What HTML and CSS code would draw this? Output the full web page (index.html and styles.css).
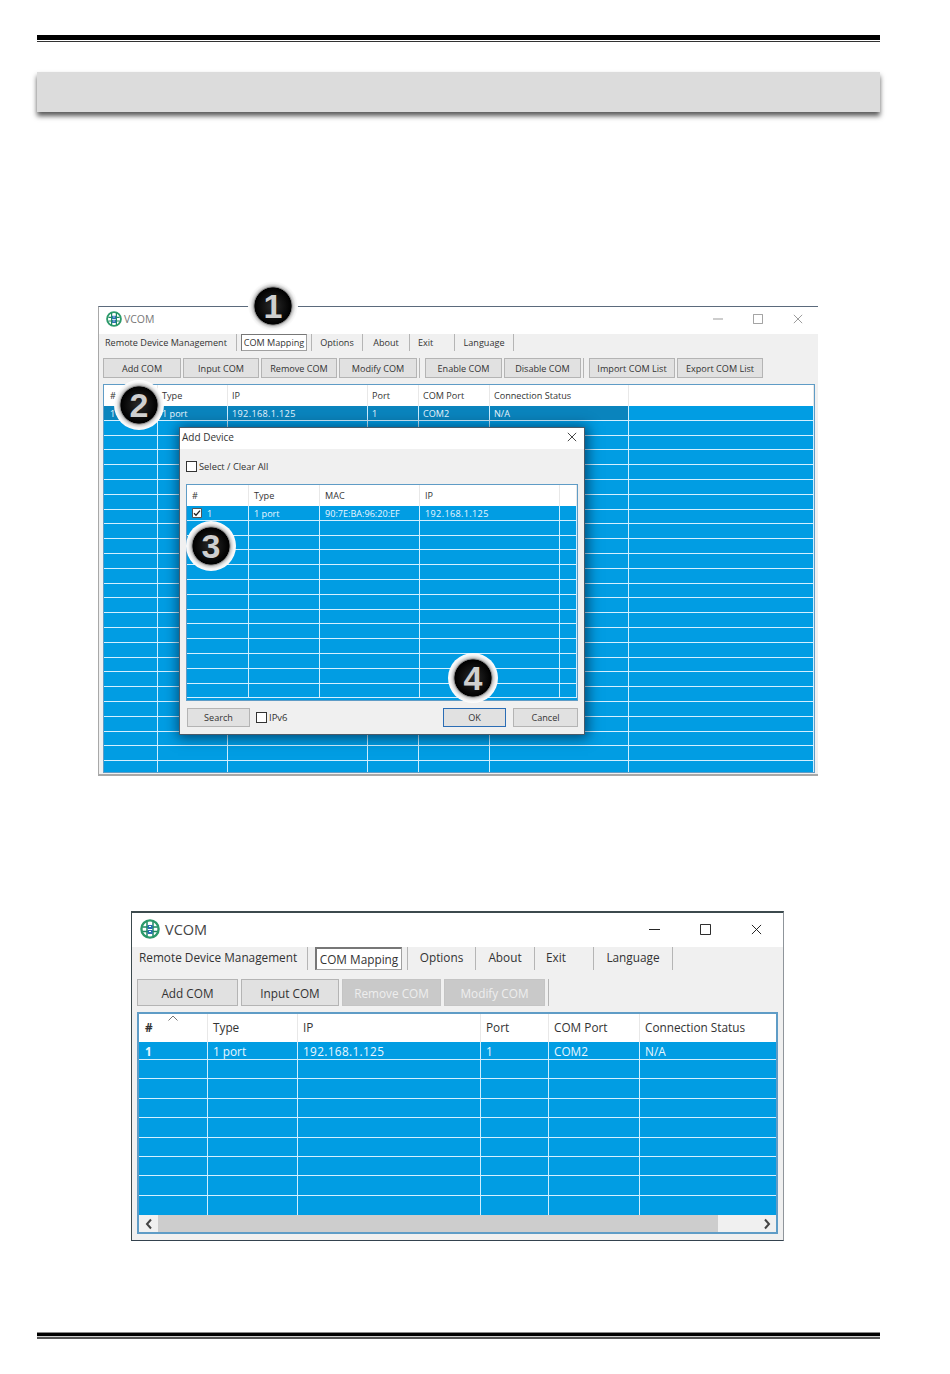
FILE: index.html
```html
<!DOCTYPE html>
<html lang="en">
<head>
<meta charset="utf-8">
<title>VCOM COM Mapping</title>
<link rel="stylesheet" href="styles.css">
</head>
<body>
<svg class="defs" width="0" height="0" aria-hidden="true">
  <symbol id="logo" viewBox="0 0 20 20">
    <circle cx="10" cy="10" r="8.6" fill="none" stroke="#2c9a6a" stroke-width="2.4"/>
    <circle cx="10" cy="10" r="7" fill="#fff"/>
    <path d="M3 8h14M3 12.5h14M7 2.5v15M13 2.5v15" stroke="#1d8a60" stroke-width="1.5"/>
    <rect x="7.6" y="6" width="5" height="4" fill="#2a6fb0"/>
    <rect x="7.6" y="11" width="5" height="4" fill="#2a6fb0"/>
    <path d="M9 7.5h2M9 12.5h2" stroke="#fff" stroke-width="1"/>
  </symbol>
  <symbol id="cmin" viewBox="0 0 12 12"><path d="M0 6h12" stroke="currentColor" fill="none"/></symbol>
  <symbol id="cmax" viewBox="0 0 12 12"><path d="M.5.5h11v11H.5z" stroke="currentColor" fill="none"/></symbol>
  <symbol id="cx" viewBox="0 0 12 12"><path d="M1 1l10 10M11 1L1 11" stroke="currentColor" fill="none"/></symbol>
</svg>

<main class="page">
  <div class="rule-top"></div>
  <div class="band"></div>

  <section class="win win-a">
    <header class="title">
      <svg class="logo"><use href="#logo"/></svg>
      <span class="title-text">VCOM</span>
      <div class="controls">
        <svg class="ctl"><use href="#cmin"/></svg>
        <svg class="ctl"><use href="#cmax"/></svg>
        <svg class="ctl"><use href="#cx"/></svg>
      </div>
    </header>
    <nav class="menu">
      <span class="m">Remote Device Management</span>
      <span class="m c"><b class="tab">COM Mapping</b></span>
      <span class="m c">Options</span>
      <span class="m c">About</span>
      <span class="m exit">Exit</span>
      <span class="m c">Language</span>
    </nav>
    <div class="tools">
      <button class="btn">Add COM</button>
      <button class="btn">Input COM</button>
      <button class="btn">Remove COM</button>
      <button class="btn">Modify COM</button>
      <i class="tsep"></i>
      <button class="btn">Enable COM</button>
      <button class="btn">Disable COM</button>
      <i class="tsep"></i>
      <button class="btn">Import COM List</button>
      <button class="btn">Export COM List</button>
    </div>
    <div class="list">
      <div class="row head"><span>#</span><span>Type</span><span>IP</span><span>Port</span><span>COM Port</span><span>Connection Status</span><span></span></div>
      <div class="row sel"><span>1</span><span>1 port</span><span class="ip">192.168.1.125</span><span>1</span><span>COM2</span><span>N/A</span><span class="nosel"></span></div>
      <div class="row"><i></i><i></i><i></i><i></i><i></i><i></i><i></i></div>
      <div class="row"><i></i><i></i><i></i><i></i><i></i><i></i><i></i></div>
      <div class="row"><i></i><i></i><i></i><i></i><i></i><i></i><i></i></div>
      <div class="row"><i></i><i></i><i></i><i></i><i></i><i></i><i></i></div>
      <div class="row"><i></i><i></i><i></i><i></i><i></i><i></i><i></i></div>
      <div class="row"><i></i><i></i><i></i><i></i><i></i><i></i><i></i></div>
      <div class="row"><i></i><i></i><i></i><i></i><i></i><i></i><i></i></div>
      <div class="row"><i></i><i></i><i></i><i></i><i></i><i></i><i></i></div>
      <div class="row"><i></i><i></i><i></i><i></i><i></i><i></i><i></i></div>
      <div class="row"><i></i><i></i><i></i><i></i><i></i><i></i><i></i></div>
      <div class="row"><i></i><i></i><i></i><i></i><i></i><i></i><i></i></div>
      <div class="row"><i></i><i></i><i></i><i></i><i></i><i></i><i></i></div>
      <div class="row"><i></i><i></i><i></i><i></i><i></i><i></i><i></i></div>
      <div class="row"><i></i><i></i><i></i><i></i><i></i><i></i><i></i></div>
      <div class="row"><i></i><i></i><i></i><i></i><i></i><i></i><i></i></div>
      <div class="row"><i></i><i></i><i></i><i></i><i></i><i></i><i></i></div>
      <div class="row"><i></i><i></i><i></i><i></i><i></i><i></i><i></i></div>
      <div class="row"><i></i><i></i><i></i><i></i><i></i><i></i><i></i></div>
      <div class="row"><i></i><i></i><i></i><i></i><i></i><i></i><i></i></div>
      <div class="row"><i></i><i></i><i></i><i></i><i></i><i></i><i></i></div>
      <div class="row"><i></i><i></i><i></i><i></i><i></i><i></i><i></i></div>
      <div class="row"><i></i><i></i><i></i><i></i><i></i><i></i><i></i></div>
      <div class="row"><i></i><i></i><i></i><i></i><i></i><i></i><i></i></div>
      <div class="row"><i></i><i></i><i></i><i></i><i></i><i></i><i></i></div>
    </div>

    <div class="dialog">
      <header class="dlg-title">
        <span>Add Device</span>
        <svg class="dlg-x"><use href="#cx"/></svg>
      </header>
      <div class="dlg-body">
        <label class="check-line"><i class="box"></i>Select / Clear All</label>
        <div class="list list-d">
          <div class="row head"><span>#</span><span>Type</span><span>MAC</span><span>IP</span><span></span></div>
          <div class="row first">
            <span class="chk-cell">
              <svg class="tick" viewBox="0 0 10 10"><path d="M.5.5h9v9h-9z" fill="#fff" stroke="#555"/><path d="M2 5.2l2 2 4-4.6" fill="none" stroke="#222" stroke-width="1.3"/></svg>
              1
            </span>
            <span>1 port</span><span>90:7E:BA:96:20:EF</span><span class="ip">192.168.1.125</span><span></span>
          </div>
          <div class="row"><i></i><i></i><i></i><i></i><i></i></div>
          <div class="row"><i></i><i></i><i></i><i></i><i></i></div>
          <div class="row"><i></i><i></i><i></i><i></i><i></i></div>
          <div class="row"><i></i><i></i><i></i><i></i><i></i></div>
          <div class="row"><i></i><i></i><i></i><i></i><i></i></div>
          <div class="row"><i></i><i></i><i></i><i></i><i></i></div>
          <div class="row"><i></i><i></i><i></i><i></i><i></i></div>
          <div class="row"><i></i><i></i><i></i><i></i><i></i></div>
          <div class="row"><i></i><i></i><i></i><i></i><i></i></div>
          <div class="row"><i></i><i></i><i></i><i></i><i></i></div>
          <div class="row"><i></i><i></i><i></i><i></i><i></i></div>
          <div class="row"><i></i><i></i><i></i><i></i><i></i></div>
        </div>
        <footer class="dlg-foot">
          <button class="btn btn-d">Search</button>
          <label class="check-line small"><i class="box"></i>IPv6</label>
          <span class="grow"></span>
          <button class="btn btn-d btn-ok">OK</button>
          <button class="btn btn-d btn-c">Cancel</button>
        </footer>
      </div>
    </div>

    <span class="badge b1">1</span>
    <span class="badge b2">2</span>
    <span class="badge b3">3</span>
    <span class="badge b4">4</span>
  </section>

  <section class="win win-b">
    <header class="title">
      <svg class="logo"><use href="#logo"/></svg>
      <span class="title-text">VCOM</span>
      <div class="controls">
        <svg class="ctl"><use href="#cmin"/></svg>
        <svg class="ctl"><use href="#cmax"/></svg>
        <svg class="ctl"><use href="#cx"/></svg>
      </div>
    </header>
    <nav class="menu">
      <span class="m">Remote Device Management</span>
      <span class="m c"><b class="tab">COM Mapping</b></span>
      <span class="m c">Options</span>
      <span class="m c">About</span>
      <span class="m exit">Exit</span>
      <span class="m c">Language</span>
    </nav>
    <div class="tools">
      <button class="btn">Add COM</button>
      <button class="btn">Input COM</button>
      <button class="btn off">Remove COM</button>
      <button class="btn off">Modify COM</button>
      <i class="tsep"></i>
    </div>
    <div class="list">
      <div class="row head"><span class="hash">#<svg class="caret" viewBox="0 0 10 6"><path d="M.5 5.5L5 1l4.5 4.5" fill="none" stroke="#777"/></svg></span><span>Type</span><span>IP</span><span>Port</span><span>COM Port</span><span>Connection Status</span></div>
      <div class="row first"><span class="strong">1</span><span>1 port</span><span class="ip">192.168.1.125</span><span>1</span><span>COM2</span><span>N/A</span></div>
      <div class="row"><i></i><i></i><i></i><i></i><i></i><i></i></div>
      <div class="row"><i></i><i></i><i></i><i></i><i></i><i></i></div>
      <div class="row"><i></i><i></i><i></i><i></i><i></i><i></i></div>
      <div class="row"><i></i><i></i><i></i><i></i><i></i><i></i></div>
      <div class="row"><i></i><i></i><i></i><i></i><i></i><i></i></div>
      <div class="row"><i></i><i></i><i></i><i></i><i></i><i></i></div>
      <div class="row"><i></i><i></i><i></i><i></i><i></i><i></i></div>
      <div class="row last"><i></i><i></i><i></i><i></i><i></i><i></i></div>
      <div class="hscroll">
        <span class="arrow"><svg viewBox="0 0 8 12"><path d="M6 1.5L2 6l4 4.5" fill="none" stroke="#444" stroke-width="2"/></svg></span>
        <span class="thumb"></span>
        <span class="grow"></span>
        <span class="arrow"><svg viewBox="0 0 8 12"><path d="M2 1.5L6 6l-4 4.5" fill="none" stroke="#444" stroke-width="2"/></svg></span>
      </div>
    </div>
  </section>

  <div class="rule-bottom"></div>
</main>
</body>
</html>
```
FILE: styles.css
```css
* { box-sizing: border-box; }
html, body { margin: 0; padding: 0; background: #fff; }
body { font-family: "Open Sans", "Noto Sans", sans-serif; color: #333; }
.defs { position: absolute; }
.page { width: 950px; height: 1374px; padding: 35px 70px 0 37px; overflow: hidden; }

.rule-top { height: 7px; border-top: 5px solid #000; border-bottom: 1px solid #333; }
.band {
  height: 40px; margin-top: 30px; background: #dcdcdc;
  box-shadow: 0 4px 5px 0 rgba(0, 0, 0, .65);
}
.rule-bottom {
  height: 7px; margin-top: 91px;
  background: linear-gradient(#000 0 3px, #ccc 3px);
  border-top: 1px solid #888; border-bottom: 2px solid #555;
}

/* window shell */
.win { position: relative; display: flex; flex-direction: column; background: #f0f0f0; }
.title { display: flex; align-items: center; background: #fff; flex: none; }
.title-text { color: #666; }
.controls { margin-left: auto; display: flex; }
.ctl { display: block; }
.menu { display: grid; flex: none; align-content: start; }
.m { display: flex; align-items: center; border-right: 1px solid #b5b5b5; white-space: nowrap; color: #333; }
.m.c { justify-content: center; }
.tab { font-weight: 400; display: flex; align-items: center; justify-content: center; background: #fff; border: 1px solid #a0a0a0; border-left-color: #777; border-top-color: #777; }
.tools { display: grid; flex: none; }
.btn {
  font: inherit; color: #333; padding: 0; background: #e1e1e1; border: 1px solid #b4b4b4;
  white-space: nowrap; display: block;
}
.btn.off { background: #c9c9c9; border-color: #c4c4c4; color: #eee; }
.tsep { display: block; border-left: 1px solid #b5b5b5; }
.list { border: 1px solid #5f9cc6; background: #019de3; overflow: hidden; }
.row { display: grid; background: #019de3; border-bottom: 1px solid #d4f0ff; color: #eaf7ff; }
.row > * { display: flex; align-items: center; border-right: 1px solid #cdeeff; white-space: nowrap; overflow: hidden; }
.row.head { background: #fff; border-bottom: 0; color: #333; }
.row.head > * { border-right-color: #e8e8e8; }
.row.sel { background: #0a84bd; }
.nosel { background: #019de3; }
.grow { flex: 1; }
.ip { letter-spacing: .35px; }

/* first window */
.win-a {
  width: 720px; height: 470px; margin: 194px 0 0 61px;
  border-top: 1px solid #5b6a7c; border-left: 1px solid #a8a8a8; border-bottom: 2px solid #a8a8a8;
  font-size: 9.1px;
}
.win-a .title { height: 27px; padding: 0 15px 3px 7px; }
.win-a .logo { width: 16px; height: 16px; margin-right: 2px; }
.win-a .title-text { font-size: 10.5px; color: #777; }
.win-a .controls { gap: 30px; color: #888; }
.win-a .ctl { width: 10px; height: 10px; }
.win-a .menu {
  height: 24px; padding-left: 6px;
  grid-template-columns: 132px 75px 51px 47px 45px 59px;
  grid-template-rows: 17px;
}
.win-a .tab { width: 66px; height: 17px; }
.win-a .exit { padding-left: 8px; }
.win-a .tools {
  height: 20px; padding-left: 4px; gap: 2px;
  grid-template-columns: 78px 76px 76px 78px 4px 77px 77px 4px 86px 86px;
}
.win-a .list { height: 389px; margin: 6px 3px 0 4px; }
.win-a .row { height: 14.8px; grid-template-columns: 54px 70px 140px 51px 71px 139px 1fr; }
.win-a .row.head { height: 21px; }
.row > span { padding-left: 4px; }
.row > span:first-child { padding-left: 6px; }
.row:not(.head) > span { padding-top: 1px; }
.row.sel > span { padding-top: 2px; }

/* dialog over the first window */
.dialog {
  position: absolute; left: 80px; top: 120px; width: 406px; height: 308px;
  display: flex; flex-direction: column; background: #f0f0f0;
  box-shadow: 1px 1px 12px 2px rgba(0, 30, 60, .65); border: 1px solid #4a5a68;
}
.dlg-title { height: 21px; flex: none; background: #fff; display: flex; align-items: center; padding: 0 7px 3px 2px; font-size: 10px; }
.dlg-x { width: 10px; height: 10px; margin-left: auto; color: #222; }
.dlg-body { flex: 1; display: flex; flex-direction: column; padding: 0 6px 0 6px; min-height: 0; }
.check-line { display: flex; align-items: center; gap: 2px; height: 35px; flex: none; color: #333; font-size: 9.3px; }
.box { display: block; width: 11px; height: 11px; background: #fff; border: 1px solid #333; }
.win-a .list-d { height: 217px; margin: 0; flex: none; }
.win-a .list-d .row { grid-template-columns: 62px 71px 100px 140px 1fr; }
.list-d .row > span { padding-left: 5px; }
.chk-cell { gap: 5px; }
.tick { width: 10px; height: 10px; flex: none; }
.dlg-foot { display: flex; align-items: center; height: 19px; margin-top: 7px; flex: none; }
.btn-d { width: 63px; height: 19px; margin-left: 1px; }
.check-line.small { height: 19px; margin-left: 6px; font-size: 9.5px; }
.btn-ok { border-color: #2b6db5; }
.btn-c { width: 65px; margin-left: 7px; }

/* numbered badges */
.badge {
  position: absolute; width: 50px; height: 50px; border-radius: 50%;
  display: flex; align-items: center; justify-content: center;
  font-family: "Liberation Sans", sans-serif; font-weight: 700; font-size: 34px; line-height: 1;
  color: #cfcfcf;
  background: radial-gradient(circle closest-side at 50% 50%, #2a2a2a 0, #101010 45%, #000 73%, #777 75%, #c8c8c8 80%, #f2f2f2 90%, #fff 100%);
}
.b1 { left: 149px; top: -26px; }
.b2 { left: 15px; top: 73px; }
.b3 { left: 87px; top: 214px; }
.b4 { left: 349px; top: 346px; }

/* second window */
.win-b {
  width: 653px; height: 330px; margin: 135px 0 0 94px;
  border: 1px solid #8f959b; border-top: 2px solid #3c4a4e; border-left-color: #3c4a4e; border-bottom-color: #34424e;
  font-size: 11.8px;
}
.win-b .title { height: 34px; padding: 0 21px 2px 8px; }
.win-b .logo { width: 20px; height: 20px; margin-right: 5px; }
.win-b .title-text { font-size: 14.5px; color: #444; }
.win-b .controls { gap: 40px; color: #111; }
.win-b .ctl { width: 11px; height: 11px; }
.win-b .menu {
  height: 32px; padding-left: 7px;
  grid-template-columns: 169px 100px 68px 59px 59px 79px;
  grid-template-rows: 23px;
}
.win-b .m { align-items: flex-start; padding-top: 2px; }
.win-b .tab { width: 87px; height: 23px; margin: -2px 0 0 2px; border-width: 2px 1px 1px 2px; }
.win-b .exit { padding-left: 11px; }
.win-b .tools {
  height: 27px; padding-left: 5px; gap: 3px;
  grid-template-columns: 101px 98px 99px 101px 4px;
}
.win-b .list { height: 222px; margin: 6px 5px 0 5px; border-width: 2px; }
.win-b .row { height: 19.4px; grid-template-columns: 69px 90px 183px 68px 91px 1fr; }
.win-b .row.head { height: 28px; }
.win-b .row.head > span { padding-bottom: 3px; }
.win-b .row.first { height: 18px; }
.win-b .row.last { border-bottom: 0; }
.win-b .row > span { padding-left: 5px; }
.win-b .row > span:first-child { padding-left: 6px; }
.win-b .row > span:last-child { border-right: 0; }
.win-b .row > i:last-child { border-right: 0; }
.hash { position: relative; font-weight: 700; }
.caret { position: absolute; left: 29px; top: 1px; width: 10px; height: 6px; }
.strong { font-weight: 700; }
.hscroll { display: flex; height: 18px; background: #f0f0f0; }
.arrow { width: 19px; display: flex; align-items: center; justify-content: center; }
.arrow svg { width: 8px; height: 12px; }
.thumb { width: 560px; background: #cdcdcd; }
```
